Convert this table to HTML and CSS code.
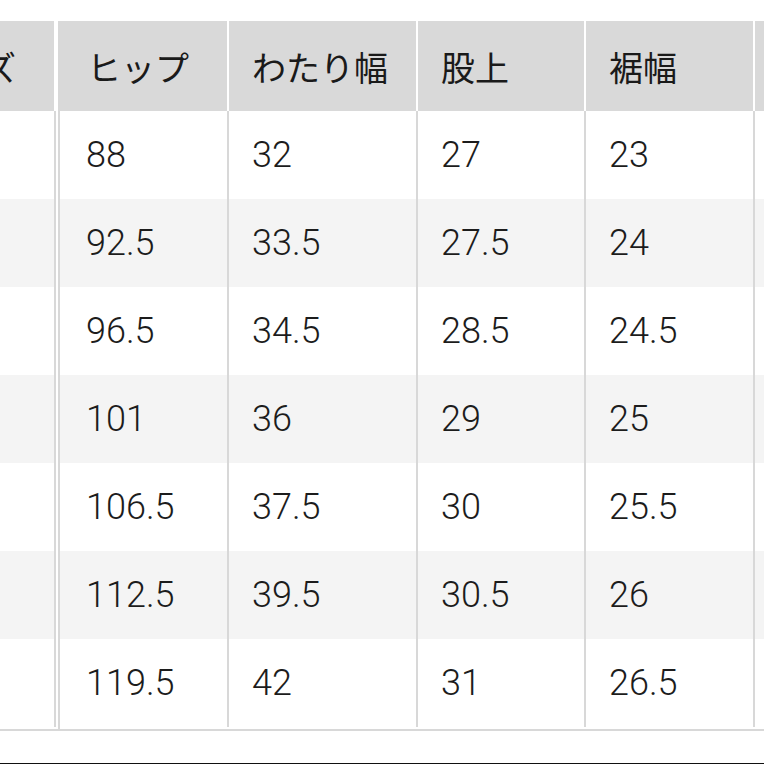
FILE: index.html
```html
<!DOCTYPE html>
<html lang="ja">
<head>
<meta charset="utf-8">
<link rel="stylesheet" href="styles.css">
<title>サイズ表</title>
</head>
<body>
<div class="page">
  <div class="tables">
    <div class="fixed">
      <div class="cell head fixed-cell"><span>サイズ</span></div>
      <div class="cell fixed-cell"></div>
      <div class="cell fixed-cell alt"></div>
      <div class="cell fixed-cell"></div>
      <div class="cell fixed-cell alt"></div>
      <div class="cell fixed-cell"></div>
      <div class="cell fixed-cell alt"></div>
      <div class="cell fixed-cell"></div>
    </div>
    <div class="scroll">
      <div class="row head-row">
        <div class="cell head c1">ヒップ</div>
        <div class="cell head c2">わたり幅</div>
        <div class="cell head c3">股上</div>
        <div class="cell head c4">裾幅</div>
        <div class="cell head c5"></div>
      </div>
      <div class="row">
        <div class="cell c1">88</div><div class="cell c2">32</div><div class="cell c3">27</div><div class="cell c4">23</div><div class="cell c5"></div>
      </div>
      <div class="row alt">
        <div class="cell c1">92.5</div><div class="cell c2">33.5</div><div class="cell c3">27.5</div><div class="cell c4">24</div><div class="cell c5"></div>
      </div>
      <div class="row">
        <div class="cell c1">96.5</div><div class="cell c2">34.5</div><div class="cell c3">28.5</div><div class="cell c4">24.5</div><div class="cell c5"></div>
      </div>
      <div class="row alt">
        <div class="cell c1">101</div><div class="cell c2">36</div><div class="cell c3">29</div><div class="cell c4">25</div><div class="cell c5"></div>
      </div>
      <div class="row">
        <div class="cell c1">106.5</div><div class="cell c2">37.5</div><div class="cell c3">30</div><div class="cell c4">25.5</div><div class="cell c5"></div>
      </div>
      <div class="row alt">
        <div class="cell c1">112.5</div><div class="cell c2">39.5</div><div class="cell c3">30.5</div><div class="cell c4">26</div><div class="cell c5"></div>
      </div>
      <div class="row">
        <div class="cell c1">119.5</div><div class="cell c2">42</div><div class="cell c3">31</div><div class="cell c4">26.5</div><div class="cell c5"></div>
      </div>
    </div>
  </div>
  <div class="edge"></div>
</div>
</body>
</html>
```

FILE: styles.css
```css
html, body {
  margin: 0;
  padding: 0;
  background: #ffffff;
}

body {
  width: 764px;
  height: 764px;
  overflow: hidden;
  font-family: Roboto, "Liberation Sans", "Noto Sans CJK JP", sans-serif;
  color: #1c1c1c;
}

.page {
  height: 764px;
  display: flex;
  flex-direction: column;
  padding-top: 21px;
  box-sizing: border-box;
}

.tables {
  display: flex;
  gap: 2px;
  height: 708px;
  border-bottom: 2px solid #d8d8d8;
}

.fixed {
  width: 56px;
  flex: none;
  display: flex;
  flex-direction: column;
}

.scroll {
  flex: 1;
  display: flex;
  flex-direction: column;
  border-left: 2px solid #d8d8d8;
  overflow: hidden;
}

.row {
  display: flex;
  height: 88px;
  flex: none;
}

.row.head-row {
  height: 90px;
  background: #d9d9d9;
}

.row.alt {
  background: #f4f4f4;
}

.cell {
  flex: none;
  box-sizing: border-box;
  height: 88px;
  display: flex;
  align-items: center;
  padding-left: 26px;
  font-size: 36px;
  font-weight: 300;
  white-space: nowrap;
  border-right: 2px solid #d8d8d8;
}

.cell.head {
  height: 90px;
  background: #d9d9d9;
  border-right-color: #ffffff;
  font-family: "Noto Sans CJK JP", sans-serif;
  font-weight: 400;
  font-size: 34px;
  color: #1a1a1a;
}

.fixed-cell {
  width: 56px;
  padding-left: 0;
  padding-right: 38px;
  justify-content: flex-end;
  overflow: hidden;
}

.fixed-cell.alt {
  background: #f4f4f4;
}

.c1 { width: 169px; padding-left: 26px; }
.c2 { width: 189px; padding-left: 23px; }
.c3 { width: 168px; padding-left: 23px; }
.c4 { width: 169px; padding-left: 23px; }
.c5 { width: 120px; border-right: none; }

.head.c1 { padding-left: 27px; }

.edge {
  margin-top: auto;
  height: 1px;
  background: #111111;
}
```
